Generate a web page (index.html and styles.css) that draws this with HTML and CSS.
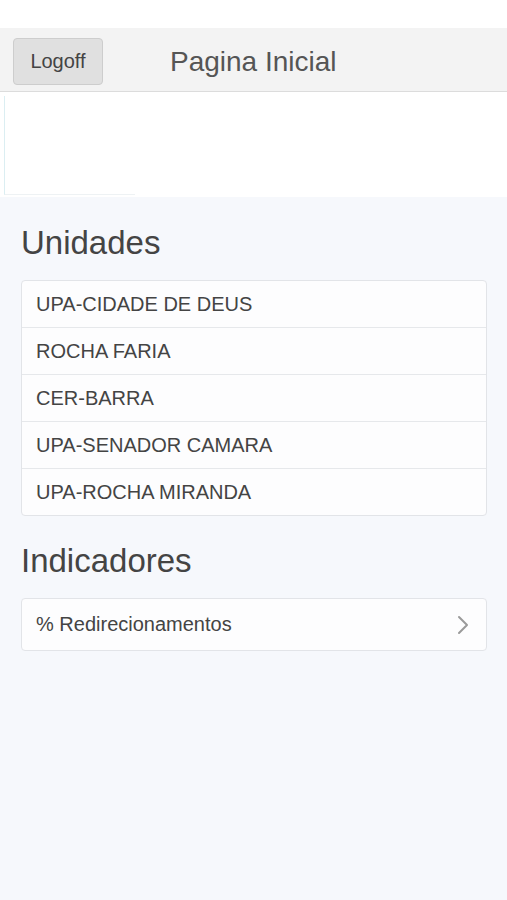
FILE: index.html
```html
<!DOCTYPE html>
<html lang="pt">
  <head>
    <meta charset="UTF-8" />
    <meta name="viewport" content="width=device-width, initial-scale=1.0" />
    <title>Pagina Inicial</title>
    <link rel="stylesheet" href="styles.css">
  </head>
  <body>
    <div class="status_bar"></div>
    <div class="top_bar">
      <button class="logoff">Logoff</button>
      <div class="page_title">Pagina Inicial</div>
    </div>
    <div class="banner">
      <div class="banner_frame"></div>
    </div>
    <div class="content">
      <h2 class="section_title">Unidades</h2>
      <ul class="list">
        <li class="list_item">UPA-CIDADE DE DEUS</li>
        <li class="list_item">ROCHA FARIA</li>
        <li class="list_item">CER-BARRA</li>
        <li class="list_item">UPA-SENADOR CAMARA</li>
        <li class="list_item">UPA-ROCHA MIRANDA</li>
      </ul>
      <h2 class="section_title">Indicadores</h2>
      <ul class="list">
        <li class="list_item link_item">
          <span>% Redirecionamentos</span>
          <svg class="chevron" width="12" height="20" viewBox="0 0 12 20">
            <path d="M2 2 L10 10 L2 18" fill="none" stroke="#9a9a9a" stroke-width="2" stroke-linecap="round" stroke-linejoin="round" />
          </svg>
        </li>
      </ul>
    </div>
  </body>
</html>
```

FILE: styles.css
```css
html,
body {
  margin: 0;
  padding: 0;
  background-color: #f6f8fc;
  font-family: "Liberation Sans", Arial, sans-serif;
  color: #444;
}

.status_bar {
  height: 28px;
  background-color: #fff;
}

.top_bar {
  display: flex;
  align-items: center;
  height: 64px;
  padding: 4px 0 0 13px;
  box-sizing: border-box;
  background-color: #f3f3f3;
  border-bottom: 1px solid #dcdcdc;
}

.logoff {
  width: 90px;
  height: 47px;
  padding: 0;
  background-color: #e0e0e0;
  border: 1px solid #cdcdcd;
  border-radius: 4px;
  font-family: "Liberation Sans", Arial, sans-serif;
  font-size: 20px;
  color: #444;
}

.page_title {
  margin-left: 67px;
  font-size: 28px;
  color: #555;
}

.banner {
  height: 105px;
  padding-top: 4px;
  box-sizing: border-box;
  background-color: #fff;
}

/* empty frame with its faint border */
.banner_frame {
  margin-left: 4px;
  width: 131px;
  height: 99px;
  border-left: 1px solid #dbeef2;
  border-bottom: 1px solid #eef2f4;
  box-sizing: border-box;
}

.content {
  padding: 26px 20px 0 21px;
}

.section_title {
  margin: 0 0 17px 0;
  font-size: 33px;
  font-weight: normal;
  line-height: 40px;
  color: #444;
}

.list {
  margin: 0 0 25px 0;
  padding: 0;
  list-style: none;
  background-color: #fdfdfe;
  border: 1px solid #e2e4e8;
  border-radius: 4px;
}

.list_item {
  height: 46px;
  line-height: 46px;
  padding-left: 14px;
  font-size: 20px;
  color: #444;
  border-top: 1px solid #e6e8eb;
}

.list_item:first-child {
  border-top: none;
}

.link_item {
  display: flex;
  justify-content: space-between;
  align-items: center;
  height: 51px;
  line-height: 51px;
  padding-right: 17px;
}

.chevron {
  display: block;
}
```
